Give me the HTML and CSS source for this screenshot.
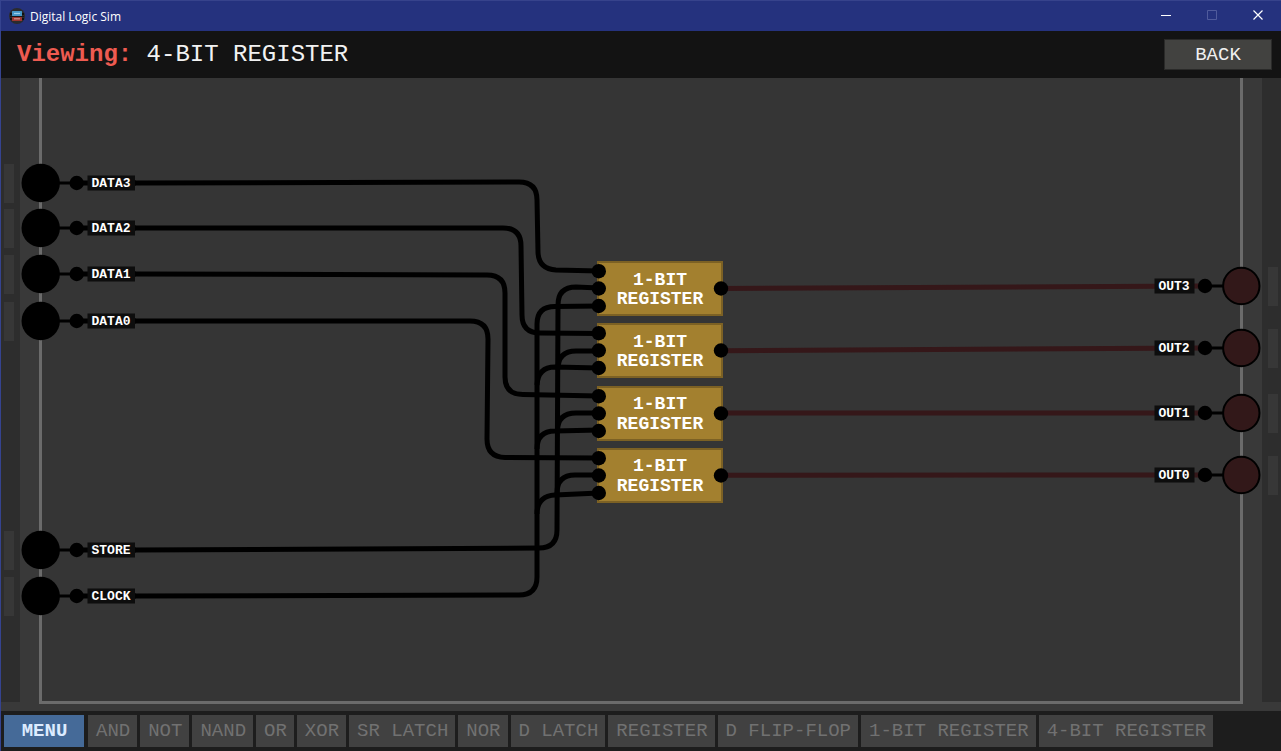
FILE: index.html
```
<!DOCTYPE html>
<html lang="en">
<head>
<meta charset="utf-8">
<title>Digital Logic Sim</title>
<link rel="stylesheet" href="styles.css">
</head>
<body>
<div class="window">
  <div class="titlebar">
    <svg class="app-icon" width="16" height="16" viewBox="0 0 16 16" aria-hidden="true">
      <circle cx="8" cy="8" r="8" fill="#2b2b2e"/>
      <path d="M1 6h2M13 6h2M1 11h2M13 11h2" stroke="#111" stroke-width="2"/>
      <rect x="3" y="3" width="10" height="5" rx=".5" fill="#4596c6"/>
      <rect x="3" y="9" width="10" height="4" rx=".5" fill="#9c3630"/>
      <path d="M5 5.500h6" stroke="#9fcde6" stroke-width="1.200"/>
      <path d="M5 10.800h6" stroke="#cf9590" stroke-width="1.200"/>
      <path d="M1 8.500h14" stroke="#171719"/>
    </svg>
    <span class="app-name">Digital Logic Sim</span>
    <button class="win-button" aria-label="Minimize"><svg width="12" height="12" viewBox="0 0 12 12"><path d="M1 5.500h10" stroke="#fff"/></svg></button>
    <button class="win-button" aria-label="Maximize" disabled><svg width="12" height="12" viewBox="0 0 12 12"><path d="M1.500 .5h9v9h-9z" fill="none" stroke="#505b9c"/></svg></button>
    <button class="win-button" aria-label="Close"><svg width="12" height="12" viewBox="0 0 12 12"><path d="M1.500 .5l9 9M10.500 .5l-9 9" stroke="#fff" stroke-width="1.200"/></svg></button>
  </div>
  <header class="viewbar">
    <h1 class="view-title"><strong class="view-mode">Viewing:</strong> 4-BIT REGISTER</h1>
    <button class="back">BACK</button>
  </header>
  <main class="board">
    <svg class="circuit" viewBox="1 78 1280 633" role="img" aria-label="4-bit register circuit">
      <defs>
        <g id="input">
          <rect class="handle" x="4" y="-19" width="10" height="39"/>
          <path class="lead" d="M58 0H76"/>
          <path class="wire" d="M76 0H136"/>
          <circle cx="40.700" cy="0" r="19.200"/>
          <circle cx="76.700" cy="0" r="7.200"/>
          <rect class="tag" x="87.500" y="-7.500" width="47.500" height="15"/>
        </g>
        <g id="output">
          <rect class="handle" x="1268" y="-19" width="10" height="39"/>
          <path class="lead" d="M1205 0H1224"/>
          <circle class="lamp" cx="1241.300" cy="0" r="18.200"/>
          <circle cx="1205" cy="0" r="7.200"/>
          <rect class="tag" x="1154.500" y="-7.500" width="40" height="15"/>
        </g>
        <g id="chip">
          <rect class="chip" x="598" y="262" width="124" height="53"/>
          <circle cx="598.800" cy="271.200" r="7.200"/>
          <circle cx="598.800" cy="288.500" r="7.200"/>
          <circle cx="598.800" cy="306" r="7.200"/>
          <circle cx="721" cy="288.500" r="7.200"/>
        </g>
      </defs>
      <rect class="rail" x="1" y="78" width="19" height="624"/>
      <rect class="rail" x="1262" y="78" width="19" height="624"/>
      <path class="frame" d="M40.500 76V702.500H1241.500V76"/>

      <g class="wire off">
        <path d="M721 288.500L1205 286"/>
        <path d="M721 350.800L1205 348"/>
        <path d="M721 413H1205"/>
        <path d="M721 475.300L1205 475"/>
      </g>
      <g class="wire">
        <path d="M135 183L519 182Q537 182 537 200L538 252Q538.500 269 556 270L599 271"/>
        <path d="M135 228H503Q521 228 521 246L522 315Q522 333 540 333L599 333.500"/>
        <path d="M135 274L487 275Q505 275 505 293V377Q505 394.500 523 394.500L599 396"/>
        <path d="M135 321H470Q488 321 488 339L487 439Q487 457 505 457.500L599 458"/>
        <path d="M135 550L539 548Q557 548 557 530L558 305Q558 287 576 287L599 288"/>
        <path d="M558 369Q558 351 576 351H599M557.500 431Q557.500 413 576 413H599M557 493Q557 475 575 475H599"/>
        <path d="M135 596L519 595Q537 595 537 577V324Q537 306.500 555 306.500L599 306"/>
        <path d="M537 385Q538 367 555 367L599 368M537 449Q537 431 555 431L599 430M537 514Q537 496 555 495L599 493"/>
      </g>

      <use href="#input" y="183"/><use href="#input" y="228"/><use href="#input" y="274"/>
      <use href="#input" y="321"/><use href="#input" y="550"/><use href="#input" y="596"/>
      <g class="pin-label">
        <text x="111" y="187">DATA3</text><text x="111" y="232">DATA2</text><text x="111" y="278">DATA1</text>
        <text x="111" y="325">DATA0</text><text x="111" y="554">STORE</text><text x="111" y="600">CLOCK</text>
      </g>

      <use href="#output" y="286"/><use href="#output" y="348"/><use href="#output" y="413"/><use href="#output" y="475"/>
      <g class="pin-label">
        <text x="1174" y="290">OUT3</text><text x="1174" y="352">OUT2</text>
        <text x="1174" y="417">OUT1</text><text x="1174" y="479">OUT0</text>
      </g>

      <use href="#chip"/><use href="#chip" y="62"/><use href="#chip" y="125"/><use href="#chip" y="187"/>
      <g class="chip-label">
        <text x="660" y="285">1-BIT</text><text x="660" y="304">REGISTER</text>
        <text x="660" y="347">1-BIT</text><text x="660" y="366">REGISTER</text>
        <text x="660" y="409">1-BIT</text><text x="660" y="429">REGISTER</text>
        <text x="660" y="471">1-BIT</text><text x="660" y="491">REGISTER</text>
      </g>
    </svg>
  </main>
  <nav class="toolbar" aria-label="Chips">
    <button class="tool menu">MENU</button>
    <button class="tool" disabled>AND</button>
    <button class="tool" disabled>NOT</button>
    <button class="tool" disabled>NAND</button>
    <button class="tool" disabled>OR</button>
    <button class="tool" disabled>XOR</button>
    <button class="tool" disabled>SR LATCH</button>
    <button class="tool" disabled>NOR</button>
    <button class="tool" disabled>D LATCH</button>
    <button class="tool" disabled>REGISTER</button>
    <button class="tool" disabled>D FLIP-FLOP</button>
    <button class="tool" disabled>1-BIT REGISTER</button>
    <button class="tool" disabled>4-BIT REGISTER</button>
  </nav>
</div>
</body>
</html>
```
FILE: styles.css
```
* { box-sizing: border-box; }
body {
  margin: 0;
  background: #1d1d1d;
  font-family: "Liberation Mono", monospace;
}
button { font: inherit; margin: 0; padding: 0; border: 0; }
.window {
  display: flex;
  flex-direction: column;
  min-height: 100vh;
  border-left: 1px solid #35438f;
}
.titlebar {
  display: flex;
  align-items: center;
  height: 31px;
  padding-left: 8px;
  background: #25327e;
  border-top: 1px solid #37438c;
  color: #fff;
  font-family: "Open Sans", "Noto Sans", sans-serif;
  font-size: 12px;
}
.app-name { flex: 1; margin-left: 5px; }
.win-button {
  display: flex;
  align-items: center;
  justify-content: center;
  width: 46px;
  height: 30px;
  background: none;
}
.viewbar {
  display: flex;
  align-items: center;
  justify-content: space-between;
  height: 47px;
  padding: 0 9px 0 16px;
  background: #131313;
}
.view-title {
  margin: 0;
  color: #f2f2f2;
  font-size: 24px;
  font-weight: 400;
  line-height: 28px;
}
.view-mode { color: #ee5b51; }
.back {
  width: 108px;
  height: 31px;
  border: 1px solid #2a2a29;
  background: #424240;
  color: #f0f0f0;
  font-size: 19px;
}
.board {
  flex: 1;
  background: #393939;
}
.circuit { display: block; width: 100%; height: auto; }
.rail { fill: #2d2d2d; }
.frame { fill: #353535; stroke: #6b6b6b; stroke-width: 3; }
.handle { fill: #373737; }
.lead { stroke: #000; stroke-width: 3; }
.wire { fill: none; stroke: #000; stroke-width: 5; }
.wire.off { stroke: #351719; }
.lamp { fill: #321819; stroke: #000; stroke-width: 2; }
.tag { fill: #0d0d0d; }
.chip { fill: #a3802f; stroke: #7c6124; stroke-width: 2; }
.pin-label, .chip-label { fill: #fff; font-weight: 700; text-anchor: middle; }
.pin-label { font-size: 13px; }
.chip-label { font-size: 18px; }
.toolbar {
  display: flex;
  flex-wrap: wrap;
  gap: 3px;
  padding: 4px 3px;
  background: #1d1d1d;
}
.tool {
  height: 32px;
  padding: 0 7px 0 8px;
  background: #414141;
  color: #717171;
  font-size: 19px;
  white-space: nowrap;
}
.menu {
  width: 80px;
  margin-right: 1px;
  background: #456a98;
  color: #dcebff;
  font-weight: 700;
}
```
